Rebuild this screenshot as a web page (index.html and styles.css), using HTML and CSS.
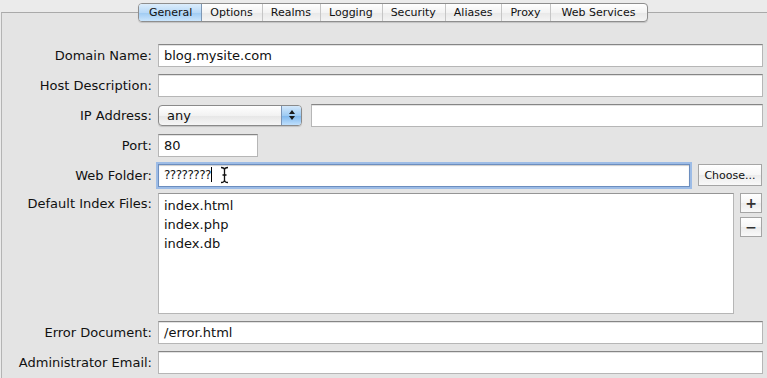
FILE: index.html
```html
<!DOCTYPE html>
<html lang="en">
<head>
    <meta charset="UTF-8">
    <title>Site Settings - General</title>
    <link rel="stylesheet" href="styles.css">
</head>
<body>
    <div class="window">
        <div class="tabs">
            <span class="tab selected">General</span>
            <span class="tab">Options</span>
            <span class="tab">Realms</span>
            <span class="tab">Logging</span>
            <span class="tab">Security</span>
            <span class="tab">Aliases</span>
            <span class="tab">Proxy</span>
            <span class="tab last">Web Services</span>
        </div>

        <div class="panel">
            <div class="row">
                <label class="label">Domain Name:</label>
                <div class="field wide">blog.mysite.com</div>
            </div>
            <div class="row">
                <label class="label">Host Description:</label>
                <div class="field wide"></div>
            </div>
            <div class="row">
                <label class="label">IP Address:</label>
                <div class="popup">
                    <span class="popup-text">any</span>
                    <span class="popup-arrows">
                        <svg width="8" height="12" viewBox="0 0 8 12">
                            <path d="M4 1 L7 5 L1 5 Z" fill="#1a1a1a"/>
                            <path d="M4 11 L7 7 L1 7 Z" fill="#1a1a1a"/>
                        </svg>
                    </span>
                </div>
                <div class="field ip-extra"></div>
            </div>
            <div class="row">
                <label class="label">Port:</label>
                <div class="field port">80</div>
            </div>
            <div class="row">
                <label class="label">Web Folder:</label>
                <div class="field folder focused">????????<span class="caret"></span>
                    <svg class="ibeam" width="9" height="18" viewBox="0 0 9 18">
                        <path d="M1 1.5 Q4.5 1.5 4.5 4 L4.5 14 Q4.5 16.5 1 16.5 M8 1.5 Q4.5 1.5 4.5 4 M4.5 14 Q4.5 16.5 8 16.5 M2.5 9 L6.5 9" fill="none" stroke="#111" stroke-width="1.3"/>
                    </svg>
                </div>
                <button class="btn choose">Choose...</button>
            </div>
            <div class="row list-row">
                <label class="label">Default Index Files:</label>
                <div class="list">
                    <div class="list-item">index.html</div>
                    <div class="list-item">index.php</div>
                    <div class="list-item">index.db</div>
                </div>
                <div class="list-buttons">
                    <button class="btn small">+</button>
                    <button class="btn small">&minus;</button>
                </div>
            </div>
            <div class="row">
                <label class="label">Error Document:</label>
                <div class="field wide">/error.html</div>
            </div>
            <div class="row">
                <label class="label">Administrator Email:</label>
                <div class="field wide"></div>
            </div>
        </div>
    </div>
</body>
</html>
```

FILE: styles.css
```css
* {
    margin: 0;
    padding: 0;
    box-sizing: border-box;
}

body {
    font-family: 'DejaVu Sans', 'Liberation Sans', sans-serif;
    background: #ebebeb;
    color: #111;
    width: 767px;
    height: 378px;
    overflow: hidden;
}

.window {
    position: relative;
    height: 378px;
    padding-top: 12px;
}

/* tab strip sits over the top edge of the panel */
.tabs {
    position: absolute;
    top: 3px;
    left: 138px;
    display: flex;
    height: 19px;
    border: 1px solid #8e8e8e;
    border-radius: 4px;
    background: linear-gradient(#ffffff, #f3f3f3 50%, #e8e8e8 51%, #f4f4f4);
    box-shadow: 0 1px 1px rgba(0, 0, 0, 0.15);
    overflow: hidden;
}

.tab {
    font-size: 11px;
    line-height: 17px;
    padding: 0 9px 0 8px;
    border-left: 1px solid #c6c6c6;
    color: #111;
}

.tab:first-child {
    border-left: none;
}

.tab.last {
    padding: 0 12px 0 11px;
}

.tab.selected {
    background: linear-gradient(#dcedfc, #b8d9f7 50%, #9ecaf2 51%, #cbe6fd);
    border-right: 1px solid #7e97b4;
    padding: 0 9px 0 10px;
}

.tab.selected + .tab {
    border-left: none;
}

.panel {
    height: 366px;
    border-top: 1px solid #a9a9a9;
    border-left: 1px solid #b4b4b4;
    margin-left: 1px;
    background: #e4e4e4;
    padding-top: 30px;
}

.row {
    display: flex;
    align-items: center;
    height: 24px;
    margin-bottom: 6px;
}

.label {
    width: 156px;
    text-align: right;
    font-size: 13px;
    padding-right: 6px;
    flex-shrink: 0;
}

.field {
    height: 23px;
    background: #fff;
    border: 1px solid #b6b6b6;
    border-top-color: #858585;
    box-shadow: inset 0 1px 0 #e2e2e2;
    font-size: 13px;
    line-height: 21px;
    padding-left: 5px;
    white-space: nowrap;
    position: relative;
}

.field.wide {
    width: 605px;
}

.field.ip-extra {
    width: 452px;
    margin-left: 9px;
}

.field.port {
    width: 100px;
}

.field.focused {
    width: 532px;
    border: 1px solid #6c8ebf;
    box-shadow: 0 0 0 2px #9dbce6, inset 0 1px 1px #ccc;
    font-size: 12px;
    letter-spacing: -0.5px;
}

.caret {
    display: inline-block;
    width: 1px;
    height: 15px;
    background: #000;
    vertical-align: -3px;
}

.ibeam {
    position: absolute;
    left: 61px;
    top: 1px;
}

.popup {
    display: flex;
    width: 144px;
    height: 21px;
    border: 1px solid #8a8a8a;
    border-radius: 4px;
    overflow: hidden;
    background: linear-gradient(#ffffff, #f2f2f2 50%, #e6e6e6 51%, #f6f6f6);
    box-shadow: 0 1px 1px rgba(0, 0, 0, 0.15);
}

.popup-text {
    flex: 1;
    font-size: 13px;
    line-height: 19px;
    padding-left: 8px;
}

.popup-arrows {
    width: 20px;
    display: flex;
    align-items: center;
    justify-content: center;
    border-left: 1px solid #7a94b6;
    background: linear-gradient(#d3e8fb, #9ecbf3 50%, #7db6ec 51%, #bfe0fd);
}

.btn {
    font-family: inherit;
    background: linear-gradient(#ffffff, #f6f6f6 50%, #ececec 51%, #f9f9f9);
    border: 1px solid #a5a5a5;
    color: #111;
}

.choose {
    width: 64px;
    height: 22px;
    margin-left: 8px;
    font-size: 11px;
}

.list-row {
    align-items: flex-start;
    height: 121px;
}

.list-row .label {
    padding-top: 3px;
}

.list {
    width: 576px;
    height: 121px;
    background: #fff;
    border: 1px solid #b6b6b6;
    border-top-color: #959595;
    padding: 2px 0 0 5px;
    font-size: 13px;
}

.list-item {
    height: 19px;
    line-height: 19px;
}

.list-buttons {
    display: flex;
    flex-direction: column;
    gap: 4px;
    margin-left: 6px;
}

.btn.small {
    width: 22px;
    height: 20px;
    font-size: 14px;
    font-weight: bold;
    line-height: 16px;
    color: #333;
}
```
